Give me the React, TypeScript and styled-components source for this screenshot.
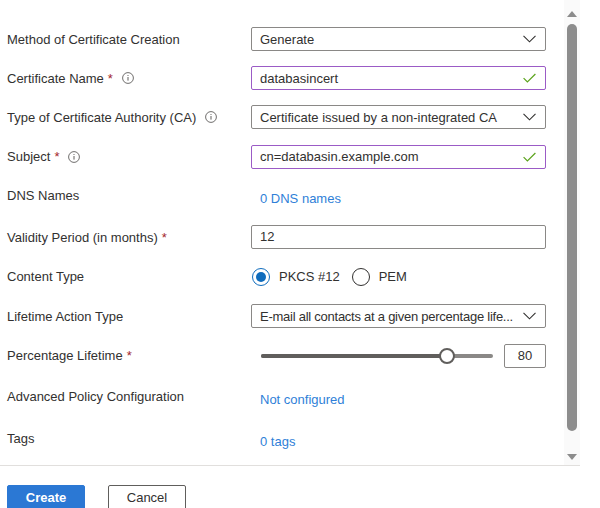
import React from "react";
import styled, { createGlobalStyle } from "styled-components";

const Global = createGlobalStyle`
  html, body { margin: 0; padding: 0; background: #ffffff; }
  body { font-family: "Liberation Sans", Arial, sans-serif; font-size: 13px; color: #323130; }
  * { box-sizing: border-box; }
`;

const Page = styled.div`
  width: 600px;
  height: 508px;
  overflow: hidden;
  background: #fff;
`;

const Panel = styled.div`
  width: 580px;
  display: flex;
  flex-direction: column;
`;

const ScrollArea = styled.div`
  height: 466px;
  display: flex;
  border-bottom: 1px solid #e1dfdd;
`;

const Form = styled.div`
  flex: 1;
  padding: 19.5px 0 0 7px;
  display: flex;
  flex-direction: column;
`;

const Row = styled.div<{ $h: number }>`
  height: ${(p) => p.$h}px;
  display: grid;
  grid-template-columns: 244px 295px;
  align-items: center;
`;

const Label = styled.div<{ $shift?: number }>`
  display: flex;
  align-items: center;
  color: #323130;
  font-size: 13px;
  white-space: nowrap;
  transform: translateY(${(p) => p.$shift ?? 0}px);
`;

const Req = styled.span`
  color: #a4262c;
  margin-left: 4px;
`;

const Info = styled.span`
  display: inline-flex;
  margin-left: 9px;
  color: #605e5c;
`;

const Field = styled.div<{ $valid?: boolean }>`
  height: 24px;
  display: flex;
  align-items: center;
  padding: 0 8px 0 8px;
  border: 1px solid ${(p) => (p.$valid ? "#9b5bc6" : "#8a8886")};
  border-radius: 2px;
  background: #fff;
  color: #323130;
  font-size: 13px;
`;

const FieldText = styled.span<{ $tight?: boolean }>`
  flex: 1;
  min-width: 0;
  overflow: hidden;
  white-space: nowrap;
  letter-spacing: ${(p) => (p.$tight ? "-0.25px" : "normal")};
`;

const Trail = styled.span`
  display: inline-flex;
  margin-left: 6px;
  margin-right: 1px;
`;

const Link = styled.a<{ $down?: number }>`
  color: #2f7fd8;
  padding-left: 9px;
  font-size: 13px;
  text-decoration: none;
  transform: translateY(${(p) => p.$down ?? 0}px);
`;

const Radios = styled.div`
  display: flex;
  align-items: center;
  padding-left: 1px;
`;

const RadioItem = styled.label`
  display: flex;
  align-items: center;
  gap: 9px;
  margin-right: 12px;
  color: #323130;
`;

const RadioCircle = styled.span<{ $on?: boolean }>`
  width: 18px;
  height: 18px;
  border-radius: 50%;
  border: 1px solid ${(p) => (p.$on ? "#0f6cbd" : "#323130")};
  display: flex;
  align-items: center;
  justify-content: center;
  &::after {
    content: "";
    width: 10px;
    height: 10px;
    border-radius: 50%;
    background: ${(p) => (p.$on ? "#0f6cbd" : "transparent")};
  }
`;

const SliderRow = styled.div`
  display: flex;
  align-items: center;
`;

const Track = styled.div`
  margin-left: 10px;
  width: 232px;
  height: 4px;
  border-radius: 2px;
  background: #8a8886;
  display: flex;
  align-items: center;
`;

const Fill = styled.div`
  height: 4px;
  border-radius: 2px;
  background: #605e5c;
`;

const Thumb = styled.div`
  width: 16px;
  height: 16px;
  flex: none;
  margin-left: -8px;
  border-radius: 50%;
  border: 2px solid #605e5c;
  background: #fff;
`;

const ValueBox = styled.div`
  margin-left: 11px;
  width: 42px;
  height: 24px;
  border: 1px solid #8a8886;
  border-radius: 2px;
  display: flex;
  align-items: center;
  justify-content: center;
  font-size: 13px;
`;

const Scrollbar = styled.div`
  width: 16px;
  background: #fafafa;
  display: flex;
  flex-direction: column;
  align-items: center;
  padding: 11px 0 5px;
`;

const ThumbBar = styled.div`
  width: 10px;
  margin: 7px 0 23px;
  flex: 1;
  border-radius: 5px;
  background: #8c8c8c;
`;

const Arrow = styled.span<{ $down?: boolean }>`
  width: 0;
  height: 0;
  border-left: 5px solid transparent;
  border-right: 5px solid transparent;
  ${(p) =>
    p.$down
      ? "border-top: 6px solid #8c8c8c;"
      : "border-bottom: 6px solid #8c8c8c;"}
`;

const Footer = styled.div`
  display: flex;
  gap: 23px;
  padding: 19px 0 0 7px;
`;

const Button = styled.button<{ $primary?: boolean }>`
  width: 78px;
  height: 25px;
  border-radius: 2px;
  font-family: "Liberation Sans", Arial, sans-serif;
  font-size: 13px;
  font-weight: ${(p) => (p.$primary ? 700 : 400)};
  color: ${(p) => (p.$primary ? "#fff" : "#323130")};
  background: ${(p) => (p.$primary ? "#2b78d4" : "#fff")};
  border: 1px solid ${(p) => (p.$primary ? "#2b78d4" : "#605e5c")};
  padding: 0;
`;

const Chevron = () => (
  <svg width="13" height="8" viewBox="0 0 13 8">
    <path d="M0.5 0.8 L6.5 6.8 L12.5 0.8" fill="none" stroke="#323130" strokeWidth="1.1" />
  </svg>
);

const Check = () => (
  <svg width="13" height="10" viewBox="0 0 13 10">
    <path d="M0.6 5.2 L4.4 9 L12.4 1" fill="none" stroke="#5ba31c" strokeWidth="1.2" />
  </svg>
);

const InfoIcon = () => (
  <svg width="12" height="12" viewBox="0 0 12 12">
    <circle cx="6" cy="6" r="5.4" fill="none" stroke="#605e5c" strokeWidth="0.9" />
    <rect x="5.5" y="5" width="1" height="3.6" fill="#605e5c" />
    <circle cx="6" cy="3.5" r="0.6" fill="#605e5c" />
  </svg>
);

export default function App() {
  const pct = 80;
  return (
    <Page>
      <Global />
      <Panel>
        <ScrollArea>
          <Form>
            <Row $h={39}>
              <Label>Method of Certificate Creation</Label>
              <Field>
                <FieldText>Generate</FieldText>
                <Trail><Chevron /></Trail>
              </Field>
            </Row>
            <Row $h={39}>
              <Label>
                Certificate Name<Req>*</Req>
                <Info><InfoIcon /></Info>
              </Label>
              <Field $valid>
                <FieldText>databasincert</FieldText>
                <Trail><Check /></Trail>
              </Field>
            </Row>
            <Row $h={39}>
              <Label>
                Type of Certificate Authority (CA)
                <Info><InfoIcon /></Info>
              </Label>
              <Field>
                <FieldText>Certificate issued by a non-integrated CA</FieldText>
                <Trail><Chevron /></Trail>
              </Field>
            </Row>
            <Row $h={40}>
              <Label>
                Subject<Req>*</Req>
                <Info><InfoIcon /></Info>
              </Label>
              <Field $valid>
                <FieldText>cn=databasin.example.com</FieldText>
                <Trail><Check /></Trail>
              </Field>
            </Row>
            <Row $h={40}>
              <Label $shift={-1}>DNS Names</Label>
              <Link href="#" $down={2}>0 DNS names</Link>
            </Row>
            <Row $h={40}>
              <Label $shift={1}>
                Validity Period (in months)<Req>*</Req>
              </Label>
              <Field>
                <FieldText>12</FieldText>
              </Field>
            </Row>
            <Row $h={40}>
              <Label>Content Type</Label>
              <Radios>
                <RadioItem>
                  <RadioCircle $on />
                  PKCS #12
                </RadioItem>
                <RadioItem>
                  <RadioCircle />
                  PEM
                </RadioItem>
              </Radios>
            </Row>
            <Row $h={39}>
              <Label>Lifetime Action Type</Label>
              <Field>
                <FieldText $tight>E-mail all contacts at a given percentage life...</FieldText>
                <Trail><Chevron /></Trail>
              </Field>
            </Row>
            <Row $h={40}>
              <Label>
                Percentage Lifetime<Req>*</Req>
              </Label>
              <SliderRow>
                <Track>
                  <Fill style={{ width: `${pct}%` }} />
                  <Thumb />
                </Track>
                <ValueBox>{pct}</ValueBox>
              </SliderRow>
            </Row>
            <Row $h={43}>
              <Label $shift={-1}>Advanced Policy Configuration</Label>
              <Link href="#" $down={2}>Not configured</Link>
            </Row>
            <Row $h={44}>
              <Label $shift={-2}>Tags</Label>
              <Link href="#" $down={1}>0 tags</Link>
            </Row>
          </Form>
          <Scrollbar>
            <Arrow />
            <ThumbBar />
            <Arrow $down />
          </Scrollbar>
        </ScrollArea>
        <Footer>
          <Button $primary>Create</Button>
          <Button>Cancel</Button>
        </Footer>
      </Panel>
    </Page>
  );
}
